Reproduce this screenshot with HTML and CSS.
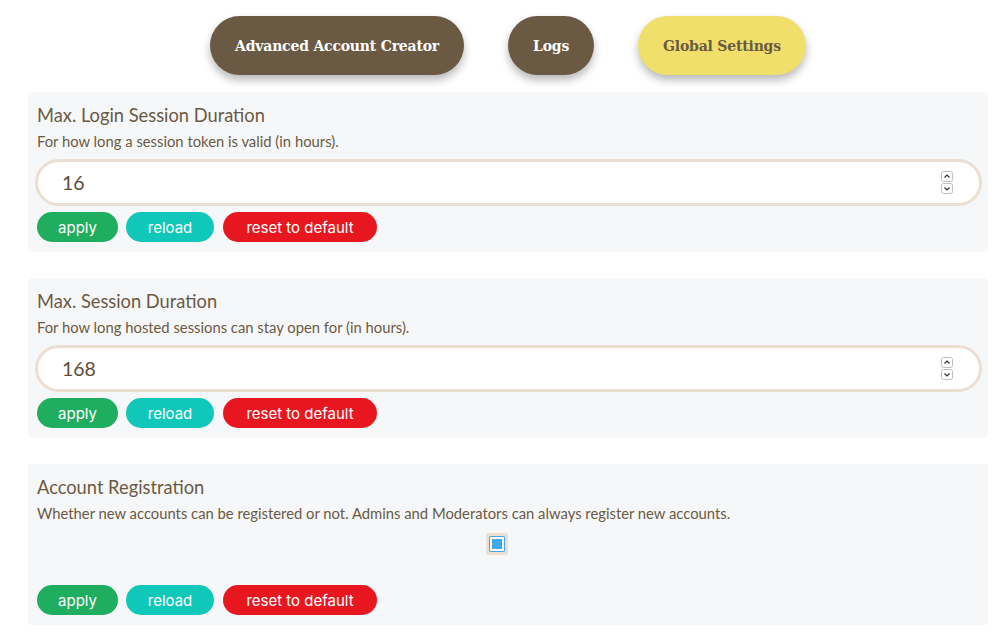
FILE: index.html
```html
<!DOCTYPE html>
<html>
<head>
<meta charset="utf-8">
<link rel="stylesheet" href="styles.css">
</head>
<body>
<div class="page">
  <nav class="nav">
    <button class="nav-btn">Advanced Account Creator</button>
    <button class="nav-btn">Logs</button>
    <button class="nav-btn active">Global Settings</button>
  </nav>

  <section class="panel">
    <h2 class="title">Max. Login Session Duration</h2>
    <p class="desc">For how long a session token is valid (in hours).</p>
    <div class="field">
      <span class="value">16</span>
      <span class="spin">
        <svg class="arr" viewBox="0 0 12 11" width="12" height="11"><rect x="0.5" y="0.5" width="11" height="10" rx="2" fill="#fff" stroke="#bdbdbd"/><path d="M3.5 6.5 L6 4 L8.5 6.5" fill="none" stroke="#333" stroke-width="1.2"/></svg>
        <svg class="arr" viewBox="0 0 12 11" width="12" height="11"><rect x="0.5" y="0.5" width="11" height="10" rx="2" fill="#fff" stroke="#bdbdbd"/><path d="M3.5 4.5 L6 7 L8.5 4.5" fill="none" stroke="#333" stroke-width="1.2"/></svg>
      </span>
    </div>
    <div class="actions">
      <button class="btn apply">apply</button>
      <button class="btn reload">reload</button>
      <button class="btn reset">reset to default</button>
    </div>
  </section>

  <section class="panel">
    <h2 class="title">Max. Session Duration</h2>
    <p class="desc">For how long hosted sessions can stay open for (in hours).</p>
    <div class="field">
      <span class="value">168</span>
      <span class="spin">
        <svg class="arr" viewBox="0 0 12 11" width="12" height="11"><rect x="0.5" y="0.5" width="11" height="10" rx="2" fill="#fff" stroke="#bdbdbd"/><path d="M3.5 6.5 L6 4 L8.5 6.5" fill="none" stroke="#333" stroke-width="1.2"/></svg>
        <svg class="arr" viewBox="0 0 12 11" width="12" height="11"><rect x="0.5" y="0.5" width="11" height="10" rx="2" fill="#fff" stroke="#bdbdbd"/><path d="M3.5 4.5 L6 7 L8.5 4.5" fill="none" stroke="#333" stroke-width="1.2"/></svg>
      </span>
    </div>
    <div class="actions">
      <button class="btn apply">apply</button>
      <button class="btn reload">reload</button>
      <button class="btn reset">reset to default</button>
    </div>
  </section>

  <section class="panel">
    <h2 class="title">Account Registration</h2>
    <p class="desc">Whether new accounts can be registered or not. Admins and Moderators can always register new accounts.</p>
    <div class="check-row">
      <span class="check"><span class="check-inner"></span></span>
    </div>
    <div class="actions">
      <button class="btn apply">apply</button>
      <button class="btn reload">reload</button>
      <button class="btn reset">reset to default</button>
    </div>
  </section>
</div>
</body>
</html>
```

FILE: styles.css
```css
* { box-sizing: border-box; }
html, body { margin: 0; padding: 0; background: #ffffff; }
body { font-family: Lato, "Open Sans", sans-serif; color: #6b5a43; }

.page {
  width: 960px;
  margin-left: 28px;
  padding-top: 16px;
}

.nav {
  display: flex;
  justify-content: center;
  gap: 44px;
  margin-bottom: 17px;
}

.nav-btn {
  height: 59px;
  border: none;
  border-radius: 30px;
  background: #6b5a43;
  color: #ffffff;
  font-family: "DejaVu Serif", "Liberation Serif", serif;
  font-weight: bold;
  font-size: 14px;
  letter-spacing: -0.2px;
  padding: 0 25px;
  box-shadow: 0 5px 8px rgba(0, 0, 0, 0.28);
}
.nav-btn.active {
  background: #f0e06b;
  color: #6b5a43;
}

.panel {
  background: #f6f7f9;
  border-radius: 4px;
  padding: 11px 9px 10px 9px;
  margin-bottom: 26px;
}

.title {
  margin: 0;
  font-size: 18.3px;
  font-weight: normal;
  line-height: 24px;
  color: #6b5a43;
}

.desc {
  margin: 5px 0 8px 0;
  font-size: 14.8px;
  line-height: 19px;
  color: #6b5a43;
}

.field {
  margin-left: -2px;
  margin-right: -3px;
  height: 47px;
  border: 3px solid #ebdfd3;
  border-radius: 24px;
  background: #ffffff;
  display: flex;
  align-items: center;
  justify-content: space-between;
  padding: 0 26px 0 24px;
}
.value {
  font-size: 19.5px;
  color: #5e4c36;
}
.spin {
  display: flex;
  flex-direction: column;
  gap: 1px;
}
.arr { display: block; }

.actions {
  display: flex;
  gap: 8px;
  margin-top: 6px;
}

.btn {
  height: 30px;
  border: none;
  border-radius: 15px;
  color: #ffffff;
  font-family: Inter, "Noto Sans", sans-serif;
  font-size: 15px;
  padding: 0;
}
.btn.apply { background: #1fae5f; width: 81px; }
.btn.reload { background: #0fc8b9; width: 88px; }
.btn.reset { background: #e8171f; width: 154px; margin-left: 1px; }

.check-row {
  display: flex;
  justify-content: center;
  height: 48px;
  padding-top: 2px;
  padding-right: 22px;
}
.check {
  width: 22px;
  height: 22px;
  background: #ebdfd3;
  border-radius: 3px;
  display: flex;
  align-items: center;
  justify-content: center;
}
.check-inner {
  width: 16px;
  height: 16px;
  border: 3px solid #ffffff;
  outline: 1px solid #42a9e6;
  outline-offset: -1px;
  background: #42a9e6;
  border-radius: 1px;
}
```
